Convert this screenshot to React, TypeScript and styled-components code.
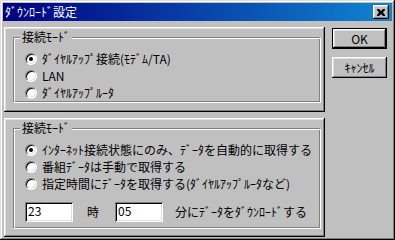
import React from "react";
import styled, { createGlobalStyle } from "styled-components";

const GlobalStyle = createGlobalStyle`
  html, body {
    margin: 0;
    padding: 0;
    background: #c0c0c0;
  }
  body {
    font-family: "Noto Sans CJK JP", "DejaVu Sans", sans-serif;
    font-size: 12px;
    color: #000;
  }
`;

const Window = styled.div`
  width: 395px;
  height: 240px;
  box-sizing: border-box;
  padding: 3px;
  background: #c0c0c0;
  display: flex;
  flex-direction: column;
  box-shadow: inset -1px -1px #000, inset 1px 1px #dfdfdf,
    inset -2px -2px #808080, inset 2px 2px #fff;
`;

const TitleBar = styled.div`
  height: 18px;
  flex-shrink: 0;
  display: flex;
  align-items: center;
  justify-content: space-between;
  padding: 0 3px 0 2px;
  background: linear-gradient(to right, #000080, #1084d0);
`;

const Title = styled.span`
  color: #fff;
  font-size: 12px;
  line-height: 14px;
`;

const CloseButton = styled.div`
  width: 16px;
  height: 14px;
  box-sizing: border-box;
  background: #c0c0c0;
  display: flex;
  align-items: center;
  justify-content: center;
  box-shadow: inset -1px -1px #000, inset 1px 1px #fff,
    inset -2px -2px #808080, inset 2px 2px #dfdfdf;
`;

const Body = styled.div`
  display: flex;
  padding: 6px 0 0 1px;
  gap: 7px;
`;

const LeftColumn = styled.div`
  display: flex;
  flex-direction: column;
  gap: 6px;
`;

const Panel = styled.div<{ $height: number }>`
  width: 321px;
  height: ${(p) => p.$height}px;
  box-sizing: border-box;
  padding: 10px 4px 0 9px;
  box-shadow: inset -1px -1px #000, inset 1px 1px #fff,
    inset -2px -2px #808080, inset 2px 2px #dfdfdf;
`;

const Group = styled.div<{ $height: number }>`
  position: relative;
  width: 308px;
  height: ${(p) => p.$height}px;
  box-sizing: border-box;
  padding: 13px 0 0 12px;

  &::before,
  &::after {
    content: "";
    position: absolute;
    pointer-events: none;
  }
  &::before {
    top: 0;
    left: 0;
    right: 1px;
    bottom: 1px;
    border: 1px solid #808080;
  }
  &::after {
    top: 1px;
    left: 1px;
    right: 0;
    bottom: 0;
    border: 1px solid #fff;
  }
`;

const Legend = styled.span`
  position: absolute;
  top: -7px;
  left: 7px;
  padding: 0 2px;
  line-height: 14px;
  background: #c0c0c0;
  z-index: 1;
`;

const RadioRow = styled.div`
  display: flex;
  align-items: center;
  height: 17px;
  gap: 5px;
  line-height: 14px;
  white-space: nowrap;
`;

const RadioCircle = styled.span<{ $checked?: boolean }>`
  width: 12px;
  height: 12px;
  flex-shrink: 0;
  box-sizing: border-box;
  border-radius: 50%;
  background: #fff;
  border-style: solid;
  border-width: 1px;
  border-color: #808080 #fff #fff #808080;
  box-shadow: inset 1px 1px #000, inset -1px -1px #dfdfdf;
  display: flex;
  align-items: center;
  justify-content: center;

  &::after {
    content: "";
    width: 4px;
    height: 4px;
    border-radius: 50%;
    background: ${(p) => (p.$checked ? "#000" : "transparent")};
  }
`;

const TimeRow = styled.div`
  display: flex;
  align-items: center;
  margin-top: 10px;
  line-height: 14px;
  white-space: nowrap;
`;

const Field = styled.div`
  width: 48px;
  height: 20px;
  box-sizing: border-box;
  padding: 2px 3px;
  line-height: 14px;
  background: #fff;
  box-shadow: inset 1px 1px #808080, inset -1px -1px #fff,
    inset 2px 2px #000, inset -2px -2px #dfdfdf;
`;

const Unit = styled.span<{ $left: number; $right?: number }>`
  margin-left: ${(p) => p.$left}px;
  margin-right: ${(p) => p.$right ?? 0}px;
`;

const RightColumn = styled.div`
  display: flex;
  flex-direction: column;
  gap: 8px;
  padding-top: 1px;
`;

const Button = styled.div<{ $default?: boolean }>`
  width: 55px;
  height: 21px;
  box-sizing: border-box;
  display: flex;
  align-items: center;
  justify-content: center;
  line-height: 14px;
  background: #c0c0c0;
  border: ${(p) => (p.$default ? "1px solid #000" : "none")};
  box-shadow: inset -1px -1px #000, inset 1px 1px #fff,
    inset -2px -2px #808080, inset 2px 2px #dfdfdf;
`;

const connectOptions = [
  "ﾀﾞｲﾔﾙｱｯﾌﾟ接続(ﾓﾃﾞﾑ/TA)",
  "LAN",
  "ﾀﾞｲﾔﾙｱｯﾌﾟﾙｰﾀ",
];

const modeOptions = [
  "ｲﾝﾀｰﾈｯﾄ接続状態にのみ、ﾃﾞｰﾀを自動的に取得する",
  "番組ﾃﾞｰﾀは手動で取得する",
  "指定時間にﾃﾞｰﾀを取得する(ﾀﾞｲﾔﾙｱｯﾌﾟﾙｰﾀなど)",
];

const App: React.FC = () => {
  return (
    <>
      <GlobalStyle />
      <Window>
        <TitleBar>
          <Title>ﾀﾞｳﾝﾛｰﾄﾞ設定</Title>
          <CloseButton>
            <svg width="8" height="7" viewBox="0 0 8 7">
              <path
                d="M0 0h2l2 2 2-2h2v1l-2 2.5 2 2.5v1h-2l-2-2-2 2h-2v-1l2-2.5-2-2.5z"
                fill="#000"
              />
            </svg>
          </CloseButton>
        </TitleBar>
        <Body>
          <LeftColumn>
            <Panel $height={85}>
              <Group $height={66}>
                <Legend>接続ﾓｰﾄﾞ</Legend>
                {connectOptions.map((label, index) => (
                  <RadioRow key={index}>
                    <RadioCircle $checked={index === 0} />
                    <span>{label}</span>
                  </RadioRow>
                ))}
              </Group>
            </Panel>
            <Panel $height={119}>
              <Group $height={101}>
                <Legend>接続ﾓｰﾄﾞ</Legend>
                {modeOptions.map((label, index) => (
                  <RadioRow key={index}>
                    <RadioCircle $checked={index === 0} />
                    <span>{label}</span>
                  </RadioRow>
                ))}
                <TimeRow>
                  <Field>23</Field>
                  <Unit $left={14} $right={16}>
                    時
                  </Unit>
                  <Field>05</Field>
                  <Unit $left={12}>分にﾃﾞｰﾀをﾀﾞｳﾝﾛｰﾄﾞする</Unit>
                </TimeRow>
              </Group>
            </Panel>
          </LeftColumn>
          <RightColumn>
            <Button $default>OK</Button>
            <Button>ｷｬﾝｾﾙ</Button>
          </RightColumn>
        </Body>
      </Window>
    </>
  );
};

export default App;
